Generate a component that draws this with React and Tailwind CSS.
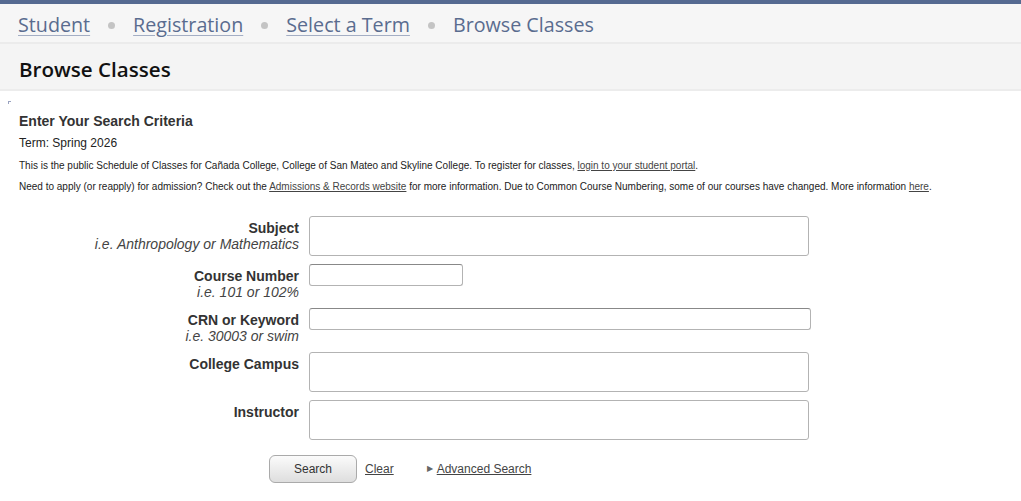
const fields = [
  { label: 'Subject', hint: 'i.e. Anthropology or Mathematics', box: 'w-[500px] h-[40px]', gap: '' },
  { label: 'Course Number', hint: 'i.e. 101 or 102%', box: 'w-[154px] h-[22px] bg-[#fafafa] border-[#aaa] border-t-[#888]', gap: 'mt-[8px]' },
  { label: 'CRN or Keyword', hint: 'i.e. 30003 or swim', box: 'w-[502px] h-[22px] bg-[#fafafa] border-[#aaa] border-t-[#888]', gap: 'mt-[7px]' },
  { label: 'College Campus', hint: '', box: 'w-[500px] h-[40px]', gap: 'mt-[7px]' },
  { label: 'Instructor', hint: '', box: 'w-[500px] h-[40px]', gap: 'mt-[8px]' },
]

function FieldRow({ label, hint, box, gap }) {
  return (
    <div className={`flex min-h-[37px] items-start ${gap}`}>
      <div className="w-[300px] pr-[1px] text-right leading-[16px]">
        <div className="pt-[4px] text-[14px] font-bold text-[#333]">{label}</div>
        {hint ? <div className="text-[14px] italic text-[#444]">{hint}</div> : null}
      </div>
      <div className={`ml-[9px] rounded-[3px] border border-[#b3b3b3] bg-white ${box}`} />
    </div>
  )
}

export default function App() {
  return (
    <div className="min-h-[501px] bg-white font-['Liberation_Sans',Arial,sans-serif] text-[#222]">
      <div className="h-[4px] bg-[#556a91]" />
      <nav className="flex h-[40px] items-center gap-[18px] border-b-2 border-[#ebebeb] bg-[#f6f6f6] px-[18px] pt-[4px] font-['Open_Sans',sans-serif] text-[19.7px] text-[#5a6c8f]">
        <a className="underline decoration-[#a4aec4] underline-offset-[3px]">Student</a>
        <span className="h-[7px] w-[7px] rounded-full bg-[#c4c4c4]" />
        <a className="underline decoration-[#a4aec4] underline-offset-[3px]">Registration</a>
        <span className="h-[7px] w-[7px] rounded-full bg-[#c4c4c4]" />
        <a className="underline decoration-[#a4aec4] underline-offset-[3px]">Select a Term</a>
        <span className="h-[7px] w-[7px] rounded-full bg-[#c4c4c4]" />
        <span>Browse Classes</span>
      </nav>
      <div className="flex h-[47px] items-center border-b-2 border-[#ececec] bg-[#f4f4f4] px-[19px] pt-[5px]">
        <h1 className="font-['Open_Sans',sans-serif] text-[20.6px] font-semibold text-[#111]">Browse Classes</h1>
      </div>

      <div className="relative px-[19px] pt-[21px]">
        <span className="absolute left-[8px] top-[10px] h-[3px] w-[3px] border-l border-t border-[#9aa3c0]" />
        <h2 className="text-[14px] font-bold leading-[18px] text-[#333]">Enter Your Search Criteria</h2>
        <p className="mt-[6px] text-[12px] leading-[14px]">Term: Spring 2026</p>
        <p className="mt-[10px] text-[10px] leading-[12px]">
          This is the public Schedule of Classes for Cañada College, College of San Mateo and Skyline College. To register for classes,{' '}
          <a className="text-[#444] underline">login to your student portal</a>.
        </p>
        <p className="mt-[9px] text-[10px] leading-[12px]">
          Need to apply (or reapply) for admission? Check out the{' '}
          <a className="text-[#444] underline">Admissions &amp; Records website</a> for more information. Due to Common Course Numbering, some of our courses have changed. More information{' '}
          <a className="text-[#444] underline">here</a>.
        </p>
      </div>

      <form className="mt-[23px] flex flex-col">
        {fields.map((f) => (
          <FieldRow key={f.label} {...f} />
        ))}
        <div className="mt-[15px] flex items-center pl-[269px] text-[12px]">
          <button
            type="button"
            className="h-[28px] w-[88px] rounded-[6px] border border-[#aaa] bg-gradient-to-b from-[#fbfbfb] to-[#dedede] text-[12px] text-[#333]"
          >
            Search
          </button>
          <a className="ml-[8px] text-[#444] underline">Clear</a>
          <span className="ml-[33px] text-[8px] text-[#666]">▶</span>
          <a className="ml-[4px] text-[#444] underline">Advanced Search</a>
        </div>
      </form>
    </div>
  )
}
